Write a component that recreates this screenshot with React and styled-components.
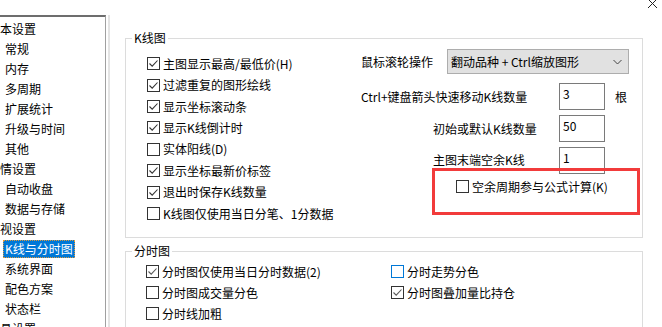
import React from "react";
import styled, { createGlobalStyle } from "styled-components";

const GlobalStyle = createGlobalStyle`
  html, body {
    margin: 0;
    padding: 0;
    background: #fff;
  }
  body {
    font-family: "Noto Sans CJK SC", "Noto Sans", sans-serif;
    font-size: 12px;
    color: #000;
  }
`;

const treeItems = [
  { text: "基本设置", level: 0 },
  { text: "常规", level: 1 },
  { text: "内存", level: 1 },
  { text: "多周期", level: 1 },
  { text: "扩展统计", level: 1 },
  { text: "升级与时间", level: 1 },
  { text: "其他", level: 1 },
  { text: "行情设置", level: 0 },
  { text: "自动收盘", level: 1 },
  { text: "数据与存储", level: 1 },
  { text: "可视设置", level: 0 },
  { text: "K线与分时图", level: 1, selected: true },
  { text: "系统界面", level: 1 },
  { text: "配色方案", level: 1 },
  { text: "状态栏", level: 1 },
  { text: "工具设置", level: 0 },
];

const klineChecks = [
  { text: "主图显示最高/最低价(H)", checked: true },
  { text: "过滤重复的图形绘线", checked: true },
  { text: "显示坐标滚动条", checked: true },
  { text: "显示K线倒计时", checked: true },
  { text: "实体阳线(D)", checked: false },
  { text: "显示坐标最新价标签", checked: true },
  { text: "退出时保存K线数量", checked: true },
  { text: "K线图仅使用当日分笔、1分数据", checked: false },
];

const Check = ({ checked, focus, gray }) => (
  <Box $focus={focus}>
    {checked && (
      <svg width="11" height="11" viewBox="0 0 11 11">
        <polyline
          points="1.5,5.5 4.2,8.2 9.5,2.5"
          fill="none"
          stroke={gray ? "#5a5a5a" : "#333"}
          strokeWidth="1.1"
        />
      </svg>
    )}
  </Box>
);

const CheckItem = ({ text, checked, focus, gray, h }) => (
  <CheckRow $h={h}>
    <Check checked={checked} focus={focus} gray={gray} />
    <span>{text}</span>
  </CheckRow>
);

export default function App() {
  return (
    <>
      <GlobalStyle />
      <Page>
        <Sidebar>
          <TreeFrame>
            <Tree>
              {treeItems.map((item) => (
                <TreeRow key={item.text} $level={item.level}>
                  <TreeLabel $selected={item.selected}>{item.text}</TreeLabel>
                </TreeRow>
              ))}
            </Tree>
          </TreeFrame>
        </Sidebar>

        <Main>
          <Group $h={208}>
            <Legend>K线图</Legend>
            <KlineBody>
              <LeftCol>
                {klineChecks.map((c) => (
                  <CheckItem key={c.text} text={c.text} checked={c.checked} h={21.43} />
                ))}
              </LeftCol>
              <RightCol>
                <WheelRow>
                  <WheelLabel>鼠标滚轮操作</WheelLabel>
                  <Select>
                    <span>翻动品种 + Ctrl缩放图形</span>
                    <svg width="9" height="6" viewBox="0 0 9 6">
                      <polyline points="0.5,1 4.5,5 8.5,1" fill="none" stroke="#444" strokeWidth="1" />
                    </svg>
                  </Select>
                </WheelRow>
                <SpinRow $mt={9}>
                  <FieldLabel $indent={2}>Ctrl+键盘箭头快速移动K线数量</FieldLabel>
                  <NumBox>3</NumBox>
                  <span>根</span>
                </SpinRow>
                <SpinRow $mt={5}>
                  <FieldLabel $indent={74}>初始或默认K线数量</FieldLabel>
                  <NumBox>50</NumBox>
                </SpinRow>
                <SpinRow $mt={5}>
                  <FieldLabel $indent={74} $up>主图末端空余K线</FieldLabel>
                  <NumBox>1</NumBox>
                </SpinRow>
                <SpareRow>
                  <CheckItem text="空余周期参与公式计算(K)" checked={false} h={21} />
                </SpareRow>
              </RightCol>
            </KlineBody>
          </Group>

          <Group $h={120} $mt={5}>
            <Legend>分时图</Legend>
            <TickGrid>
              <CheckItem text="分时图仅使用当日分时数据(2)" checked gray h={21} />
              <CheckItem text="分时走势分色" checked={false} focus h={21} />
              <CheckItem text="分时图成交量分色" checked={false} h={21} />
              <CheckItem text="分时图叠加量比持仓" checked gray h={21} />
              <CheckItem text="分时线加粗" checked={false} h={21} />
            </TickGrid>
          </Group>
        </Main>

        <Highlight />
        <CloseMark>
          <svg width="11" height="11" viewBox="0 0 11 11">
            <line x1="1" y1="1" x2="10" y2="10" stroke="#222" strokeWidth="1" />
            <line x1="10" y1="1" x2="1" y2="10" stroke="#222" strokeWidth="1" />
          </svg>
        </CloseMark>
      </Page>
    </>
  );
}

const Page = styled.div`
  position: relative;
  display: flex;
  align-items: flex-start;
  width: 662px;
  height: 327px;
  overflow: hidden;
  background: #fff;
`;

const Sidebar = styled.div`
  flex: none;
  margin-left: -20px;
  padding-top: 15px;
  height: 327px;
  box-sizing: border-box;
`;

const TreeFrame = styled.div`
  height: 100%;
  padding-right: 2px;
  border-right: 2px solid #e4e4e4;
`;

const Tree = styled.div`
  width: 126px;
  height: 100%;
  box-sizing: border-box;
  border-top: 2px solid #6d6d6d;
  border-right: 1px solid #a0a0a0;
  padding-top: 1.5px;
`;

const TreeRow = styled.div`
  display: flex;
  align-items: center;
  height: 20px;
  padding-left: ${(p) => (p.$level ? 23 : 6)}px;
  white-space: nowrap;
`;

const TreeLabel = styled.span`
  display: inline-block;
  height: 18px;
  line-height: 18px;
  padding: 0 2px;
  box-sizing: border-box;
  background: ${(p) => (p.$selected ? "#0078d7" : "transparent")};
  color: ${(p) => (p.$selected ? "#fff" : "#000")};
  outline: ${(p) => (p.$selected ? "1px dotted #e09a3a" : "none")};
  outline-offset: -1px;
`;

const Main = styled.div`
  flex: 1;
  padding: 30px 0 0 15px;
  box-sizing: border-box;
`;

const Group = styled.fieldset`
  margin: ${(p) => p.$mt || 0}px 0 0 0;
  padding: 0;
  min-width: 0;
  width: 518px;
  height: ${(p) => p.$h}px;
  box-sizing: border-box;
  border: 1px solid #dcdcdc;
`;

const Legend = styled.legend`
  margin-left: 6px;
  padding: 0 2px;
  font-size: 12px;
  line-height: 16px;
`;

const KlineBody = styled.div`
  display: flex;
  align-items: flex-start;
  padding: 7px 0 0 21px;
`;

const LeftCol = styled.div`
  width: 212px;
  display: flex;
  flex-direction: column;
`;

const CheckRow = styled.div`
  display: flex;
  align-items: center;
  height: ${(p) => p.$h}px;
  white-space: nowrap;
  line-height: 16px;
`;

const Box = styled.span`
  flex: none;
  width: 13px;
  height: 13px;
  box-sizing: border-box;
  margin-right: 3px;
  border: 1px solid ${(p) => (p.$focus ? "#0078d7" : "#333")};
  background: #fff;
  display: grid;
  place-items: center;
`;

const RightCol = styled.div`
  flex: 1;
  margin-top: -4px;
  display: flex;
  flex-direction: column;
`;

const WheelRow = styled.div`
  display: flex;
  align-items: center;
  height: 25px;
  padding-left: 2px;
`;

const WheelLabel = styled.span`
  width: 86px;
  white-space: nowrap;
`;

const Select = styled.div`
  width: 182px;
  height: 25px;
  box-sizing: border-box;
  border: 1px solid #adadad;
  background: #e1e1e1;
  display: flex;
  align-items: center;
  justify-content: space-between;
  padding: 0 6px 0 3px;
  white-space: pre;
`;

const SpinRow = styled.div`
  display: grid;
  grid-template-columns: 190px 46px auto;
  column-gap: 10px;
  align-items: center;
  height: 27px;
  margin-top: ${(p) => p.$mt}px;
`;

const FieldLabel = styled.span`
  padding-left: ${(p) => p.$indent}px;
  white-space: nowrap;
  margin-right: -10px;
  margin-top: ${(p) => (p.$up ? -3 : 0)}px;
`;

const NumBox = styled.div`
  height: 27px;
  box-sizing: border-box;
  border: 1px solid #7a7a7a;
  padding: 2px 3px;
  line-height: 16px;
  background: #fff;
`;

const SpareRow = styled.div`
  margin-top: 2px;
  padding-left: 97px;
`;

const TickGrid = styled.div`
  display: grid;
  grid-template-columns: 245px 1fr;
  padding: 2px 0 0 20px;
`;

const Highlight = styled.div`
  position: absolute;
  left: 432px;
  top: 168px;
  width: 208px;
  height: 47px;
  box-sizing: border-box;
  border: 3px solid #f23b3b;
  pointer-events: none;
`;

const CloseMark = styled.div`
  position: absolute;
  left: 647px;
  top: -2px;
  line-height: 0;
`;
